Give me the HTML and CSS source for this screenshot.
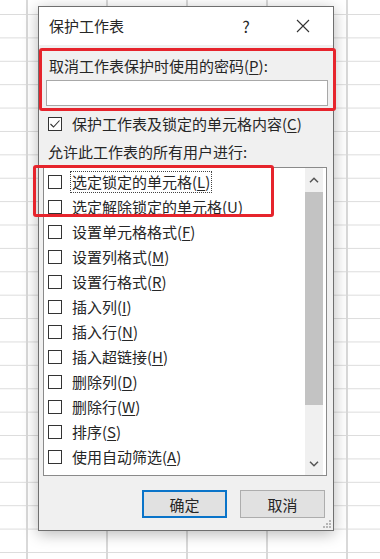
FILE: index.html
```html
<!DOCTYPE html>
<html>
<head>
  <meta charset="utf-8">
  <title>保护工作表</title>
  <link rel="stylesheet" href="styles.css">
</head>
<body>
  <div class="dialog">
    <div class="titlebar">
      <div class="title">保护工作表</div>
      <div class="help">?</div>
      <div class="close">
        <svg width="14" height="14" viewBox="0 0 14 14"><path d="M1 1 L13 13 M13 1 L1 13" stroke="#333" stroke-width="1.1" fill="none"/></svg>
      </div>
    </div>

    <div class="content">
      <div class="pw-group">
        <div class="label">取消工作表保护时使用的密码(<u>P</u>):</div>
        <input class="pw-input" type="password">
      </div>

      <div class="check-row">
        <span class="box">
          <svg width="14" height="14" viewBox="0 0 14 14"><path d="M2.5 7 L5.5 10 L11.5 3.5" stroke="#333" stroke-width="1.1" fill="none"/></svg>
        </span>
        <span>保护工作表及锁定的单元格内容(<u>C</u>)</span>
      </div>

      <div class="section-label">允许此工作表的所有用户进行:</div>

      <div class="list">
        <div class="items">
          <div class="item"><span class="box"></span><span class="text focus">选定锁定的单元格(<u>L</u>)</span></div>
          <div class="item"><span class="box"></span><span class="text">选定解除锁定的单元格(<u>U</u>)</span></div>
          <div class="item"><span class="box"></span><span class="text">设置单元格格式(<u>F</u>)</span></div>
          <div class="item"><span class="box"></span><span class="text">设置列格式(<u>M</u>)</span></div>
          <div class="item"><span class="box"></span><span class="text">设置行格式(<u>R</u>)</span></div>
          <div class="item"><span class="box"></span><span class="text">插入列(<u>I</u>)</span></div>
          <div class="item"><span class="box"></span><span class="text">插入行(<u>N</u>)</span></div>
          <div class="item"><span class="box"></span><span class="text">插入超链接(<u>H</u>)</span></div>
          <div class="item"><span class="box"></span><span class="text">删除列(<u>D</u>)</span></div>
          <div class="item"><span class="box"></span><span class="text">删除行(<u>W</u>)</span></div>
          <div class="item"><span class="box"></span><span class="text">排序(<u>S</u>)</span></div>
          <div class="item"><span class="box"></span><span class="text">使用自动筛选(<u>A</u>)</span></div>
          <div class="item"><span class="box"></span><span class="text">使用数据透视表和数据透视图(<u>Z</u>)</span></div>
        </div>
        <div class="scrollbar">
          <div class="arrow up">
            <svg width="10" height="6" viewBox="0 0 10 6"><path d="M1 5.2 L5 1.2 L9 5.2" stroke="#555" stroke-width="1.5" fill="none"/></svg>
          </div>
          <div class="thumb"></div>
          <div class="track"></div>
          <div class="arrow down">
            <svg width="10" height="6" viewBox="0 0 10 6"><path d="M1 0.8 L5 4.8 L9 0.8" stroke="#555" stroke-width="1.5" fill="none"/></svg>
          </div>
        </div>
      </div>

      <div class="buttons">
        <button class="btn default">确定</button>
        <button class="btn">取消</button>
      </div>

      <div class="mark"></div>
    </div>

    <svg class="grip" width="10" height="10" viewBox="0 0 10 10">
      <rect x="7" y="1" width="2" height="2" fill="#b5b5b5"/>
      <rect x="4" y="4" width="2" height="2" fill="#b5b5b5"/>
      <rect x="7" y="4" width="2" height="2" fill="#b5b5b5"/>
      <rect x="1" y="7" width="2" height="2" fill="#b5b5b5"/>
      <rect x="4" y="7" width="2" height="2" fill="#b5b5b5"/>
      <rect x="7" y="7" width="2" height="2" fill="#b5b5b5"/>
    </svg>
  </div>
</body>
</html>
```

FILE: styles.css
```css
body {
  margin: 0;
  width: 380px;
  height: 559px;
  overflow: hidden;
  background-color: #fff;
  background-image:
    linear-gradient(to right, #d9d9d9 2px, transparent 2px),
    linear-gradient(to bottom, #dcdcdc 1px, transparent 1px);
  background-size: 80px 100%, 100% 23.4px;
  background-position: 26px 0, 0 14px;
  font-family: "Noto Sans CJK SC", sans-serif;
  font-size: 15px;
  color: #262626;
}

u {
  text-decoration: underline;
  text-decoration-thickness: 1px;
  text-underline-offset: 2px;
}

.dialog {
  position: relative;
  margin: 6px 0 0 38px;
  width: 296px;
  box-sizing: border-box;
  border: 1px solid #6f6f6f;
  background-color: #f0f0f0;
  box-shadow: 0 3px 14px rgba(0, 0, 0, 0.28);
}

.titlebar {
  display: flex;
  align-items: center;
  height: 38px;
  background-color: #fff;
}

.title {
  flex: 1;
  padding-left: 10px;
  line-height: 20px;
}

.help {
  width: 30px;
  text-align: center;
  font-size: 16px;
  line-height: 20px;
}

.close {
  display: flex;
  justify-content: center;
  align-items: center;
  width: 46px;
  height: 38px;
  margin-left: 19px;
  margin-right: 7px;
}

.content {
  position: relative;
  padding-top: 3px;
  padding-bottom: 12px;
}

.pw-group {
  margin-right: -3px;
  padding: 5px 5px 2px 4px;
  border: 3px solid #e6242c;
  border-radius: 3px;
}

.label {
  line-height: 20px;
  padding-left: 3px;
}

.pw-input {
  display: block;
  margin-top: 4px;
  width: 282px;
  height: 26px;
  box-sizing: border-box;
  border: 1px solid #a8a8a8;
  background-color: #fff;
  outline: none;
}

.check-row {
  display: flex;
  align-items: center;
  margin-top: 3px;
  padding-left: 9px;
  height: 20px;
  line-height: 20px;
}

.box {
  display: inline-block;
  flex: none;
  width: 14px;
  height: 14px;
  box-sizing: border-box;
  border: 1px solid #333;
  background-color: #fff;
  margin-right: 10px;
  position: relative;
}

.box svg {
  position: absolute;
  left: -1px;
  top: -1px;
}

.section-label {
  margin-top: 8px;
  padding-left: 9px;
  height: 20px;
  line-height: 20px;
}

.list {
  display: flex;
  margin: 5px 0 0 4px;
  width: 284px;
  height: 309px;
  box-sizing: border-box;
  border: 1px solid #8a8a8a;
  background-color: #fff;
  overflow: hidden;
}

.items {
  flex: 1;
  padding-top: 1px;
  overflow: hidden;
}

.item {
  display: flex;
  align-items: center;
  height: 25px;
  padding-left: 4px;
  white-space: nowrap;
}

.item .text {
  line-height: 20px;
  padding: 0 1px;
  border: 1px solid transparent;
  margin-left: -2px;
}

.item .text.focus {
  border: 1px dotted #444;
}

.scrollbar {
  display: flex;
  flex-direction: column;
  flex: none;
  width: 18px;
  margin-right: 3px;
  background-color: #f0f0f0;
}

.arrow {
  display: flex;
  justify-content: center;
  align-items: center;
}

.arrow.up {
  height: 24px;
}

.arrow.down {
  height: 22px;
}

.thumb {
  height: 213px;
  background-color: #c3c3c3;
}

.track {
  flex: 1;
}

.buttons {
  display: flex;
  justify-content: flex-end;
  gap: 13px;
  margin-top: 14px;
  padding-right: 8px;
}

.btn {
  width: 85px;
  height: 28px;
  box-sizing: border-box;
  border: 1px solid #adadad;
  background-color: #e1e1e1;
  font-family: "Noto Sans CJK SC", sans-serif;
  font-size: 15px;
  color: #262626;
  padding: 0;
}

.btn.default {
  border: 2px solid #0a74c9;
}

.mark {
  position: absolute;
  left: -6px;
  top: 120px;
  width: 241px;
  height: 52px;
  box-sizing: border-box;
  border: 3px solid #e6242c;
  border-radius: 3px;
}

.grip {
  position: absolute;
  right: 1px;
  bottom: 1px;
}
```
